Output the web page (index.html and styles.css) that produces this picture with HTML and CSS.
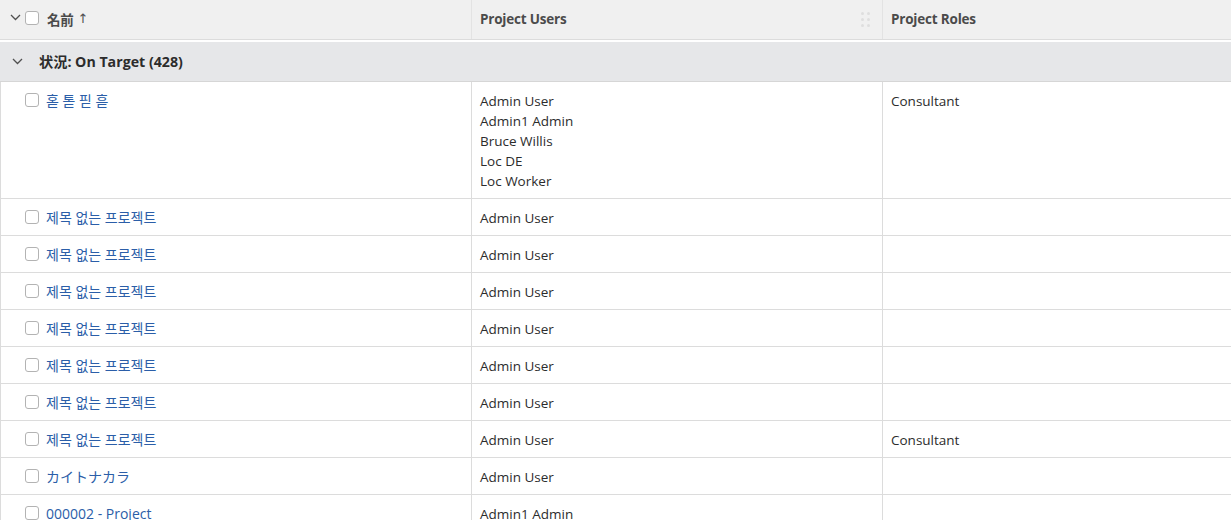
FILE: index.html
```html
<!DOCTYPE html>
<html>
<head>
<meta charset="utf-8">
<link rel="stylesheet" href="styles.css">
</head>
<body>
<div class="table">
  <div class="head">
    <div class="hcell first">
      <svg class="chev" width="11" height="7" viewBox="0 0 11 7"><path d="M1 1l4.5 4.5L10 1" fill="none" stroke="#505050" stroke-width="1.3"/></svg>
      <span class="cb"></span>
      <span class="htext">名前</span>
      <span class="arrow">↑</span>
    </div>
    <div class="hcell">
      <span class="htext">Project Users</span>
      <span class="handle"><i></i><i></i><i></i><i></i><i></i><i></i></span>
    </div>
    <div class="hcell last">
      <span class="htext">Project Roles</span>
    </div>
  </div>
  <div class="group">
    <svg class="gchev" width="11" height="7" viewBox="0 0 11 7"><path d="M1 1l4.5 4.5L10 1" fill="none" stroke="#505050" stroke-width="1.3"/></svg>
    <span class="gtext">状況: On Target (428)</span>
  </div>
  <div class="row">
    <div class="cell name"><span class="cb"></span><a class="link">혿 톧 핃 흗</a></div>
    <div class="cell">Admin User<br>Admin1 Admin<br>Bruce Willis<br>Loc DE<br>Loc Worker</div>
    <div class="cell">Consultant</div>
  </div>
  <div class="row">
    <div class="cell name"><span class="cb"></span><a class="link">제목 없는 프로젝트</a></div>
    <div class="cell">Admin User</div>
    <div class="cell"></div>
  </div>
  <div class="row">
    <div class="cell name"><span class="cb"></span><a class="link">제목 없는 프로젝트</a></div>
    <div class="cell">Admin User</div>
    <div class="cell"></div>
  </div>
  <div class="row">
    <div class="cell name"><span class="cb"></span><a class="link">제목 없는 프로젝트</a></div>
    <div class="cell">Admin User</div>
    <div class="cell"></div>
  </div>
  <div class="row">
    <div class="cell name"><span class="cb"></span><a class="link">제목 없는 프로젝트</a></div>
    <div class="cell">Admin User</div>
    <div class="cell"></div>
  </div>
  <div class="row">
    <div class="cell name"><span class="cb"></span><a class="link">제목 없는 프로젝트</a></div>
    <div class="cell">Admin User</div>
    <div class="cell"></div>
  </div>
  <div class="row">
    <div class="cell name"><span class="cb"></span><a class="link">제목 없는 프로젝트</a></div>
    <div class="cell">Admin User</div>
    <div class="cell"></div>
  </div>
  <div class="row">
    <div class="cell name"><span class="cb"></span><a class="link">제목 없는 프로젝트</a></div>
    <div class="cell">Admin User</div>
    <div class="cell">Consultant</div>
  </div>
  <div class="row">
    <div class="cell name"><span class="cb"></span><a class="link">カイトナカラ</a></div>
    <div class="cell">Admin User</div>
    <div class="cell"></div>
  </div>
  <div class="row">
    <div class="cell name"><span class="cb"></span><a class="link">000002 - Project</a></div>
    <div class="cell">Admin1 Admin</div>
    <div class="cell"></div>
  </div>
</div>
</body>
</html>
```
FILE: styles.css
```css
* { box-sizing: border-box; }
html, body { margin: 0; padding: 0; background: #fff; }
body {
  font-family: "Open Sans", "Noto Sans CJK KR", "Noto Sans CJK JP", sans-serif;
  font-size: 13.5px;
  color: #2c2c2c;
  overflow: hidden;
}
.table { width: 1231px; }
.head {
  display: grid;
  grid-template-columns: 472px 411px 1fr;
  height: 40px;
  background: #f0f0f0;
  border-bottom: 1px solid #dcdcdc;
}
.hcell {
  display: flex;
  align-items: center;
  padding-left: 8px;
  padding-bottom: 2px;
  border-right: 1px solid #e3e3e3;
  position: relative;
}
.hcell.first { padding-left: 10px; }
.hcell.last { border-right: none; }
.htext { font-weight: 700; color: #4b4b4b; letter-spacing: -0.2px; }
.chev { margin-top: -2px; margin-right: 4px; }
.hcell .cb { margin-right: 8px; margin-top: -1px; }
.arrow { margin-left: 4px; color: #505050; font-size: 13px; font-family: "DejaVu Sans", sans-serif; }
.handle {
  position: absolute;
  right: 12px;
  top: 12px;
  width: 9px;
  display: grid;
  grid-template-columns: 3px 3px;
  column-gap: 3px;
  row-gap: 3px;
}
.handle i { width: 3px; height: 3px; border-radius: 50%; background: #dedede; }
.group {
  margin-top: 2px;
  height: 40px;
  background: #e6e7e9;
  border-bottom: 1px solid #d6d6d6;
  display: flex;
  align-items: center;
  padding-left: 12px;
  padding-bottom: 1px;
}
.gchev { margin-right: 16px; margin-top: 0; }
.gtext { font-weight: 700; font-size: 14.2px; color: #2c2c2c; }
.row {
  display: grid;
  grid-template-columns: 472px 411px 1fr;
  border-bottom: 1px solid #dcdcdc;
}
.cell {
  padding: 9px 8px 7px;
  line-height: 20px;
  border-right: 1px solid #dcdcdc;
  min-height: 36px;
}
.cell:last-child { border-right: none; }
.cell.name {
  border-left: 1px solid #dcdcdc;
  padding-left: 24px;
  display: flex;
  align-items: flex-start;
  font-size: 14px;
}
.cb {
  display: inline-block;
  width: 14px;
  height: 14px;
  border: 1px solid #b3b3b3;
  border-radius: 3px;
  background: #fff;
  flex: none;
}
.cell.name .cb { margin-top: 2px; margin-right: 7px; }
.link { color: #2b5ea8; text-decoration: none; }
```
